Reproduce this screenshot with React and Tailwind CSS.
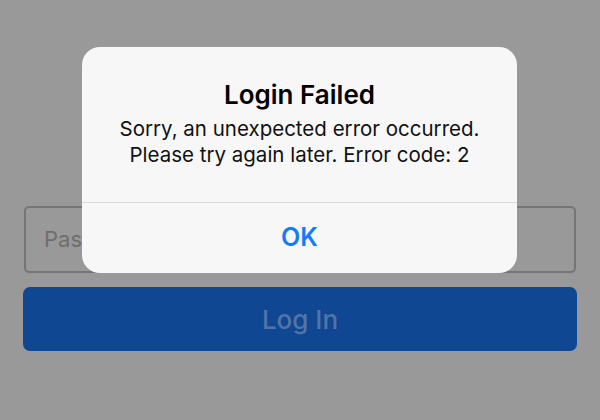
import React from 'react';

export default function App() {
  return (
    <div
      className="relative w-[600px] h-[420px] overflow-hidden bg-[#999999]"
      style={{ fontFamily: 'Inter, "Noto Sans", sans-serif' }}
    >
      {/* form behind the alert */}
      <div className="flex flex-col gap-[14px] pt-[206px] px-[23px]">
        <div className="mx-[1px] h-[67px] rounded-[5px] border-2 border-[#767676] flex items-center px-[18px]">
          <span className="text-[22px] text-[#6e6e6e]">Password</span>
        </div>
        <button className="h-[64px] rounded-[7px] bg-[#0f4792] text-[26px] font-medium text-[#5274a6]">
          Log In
        </button>
      </div>

      {/* alert */}
      <div className="absolute left-[82px] top-[47px] w-[435px] h-[226px] rounded-[18px] bg-[#f7f7f8] flex flex-col">
        <div className="h-[155px] flex flex-col items-center pt-[32px] text-center text-black">
          <div className="text-[26px] leading-[32px] font-semibold">Login Failed</div>
          <div className="mt-[5px] text-[20.5px] leading-[26px] text-[#111]">
            Sorry, an unexpected error occurred.
            <br />
            Please try again later. Error code: 2
          </div>
        </div>
        <div className="h-px bg-[#dadada]" />
        <button className="flex-1 flex items-center justify-center text-[25px] font-semibold text-[#157cf5]">
          OK
        </button>
      </div>
    </div>
  );
}
